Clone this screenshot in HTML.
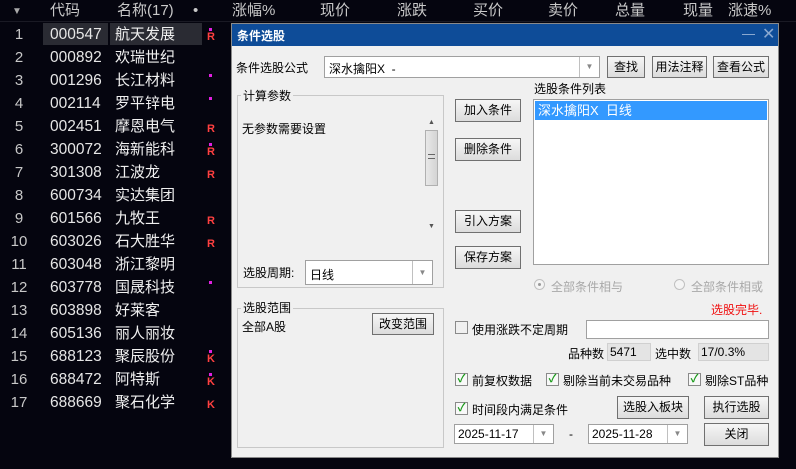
<!DOCTYPE html>
<html><head><meta charset="utf-8">
<style>
*{box-sizing:border-box;margin:0;padding:0}
body{width:796px;height:469px;background:#05050f;position:relative;overflow:hidden;font-family:"Liberation Sans","Noto Sans CJK SC",sans-serif}
.a{position:absolute;white-space:nowrap}
.h{color:#c8c8c8;font-size:15px;top:1px;line-height:20px}
.n,.c,.nm{line-height:21px;height:21px}
.n{color:#c8c8c8;font-size:15px;width:30px;text-align:center;left:4px}
.c{color:#e6e6e6;font-size:15.5px;left:50px}
.nm{color:#f0f0f0;font-size:15px;left:115px}
.dot{width:3px;height:3px;background:#e020e0;left:209px}
.mk{color:#ff4040;font-size:11px;font-weight:bold;left:207px}
.dlg{left:231px;top:23px;width:548px;height:435px;background:#f0f0f0;border:1px solid #8a8a8a}
.t{font-size:12px;color:#000}
.btn{position:absolute;background:linear-gradient(#f6f6f6,#dcdcdc);border:1px solid #707070;font-size:12px;text-align:center;color:#000}
.box{position:absolute;background:#fff;border:1px solid #a0a0a0}
.grp{position:absolute;border:1px solid #c8c8c8}
.cb{position:absolute;width:13px;height:13px;border:1px solid #8a8a8a;background:#f8f8f8;font-size:11px;color:#1a9a1a;line-height:11px;text-align:center;font-weight:bold}
.arr{position:absolute;right:0;top:0;bottom:0;width:20px;border-left:1px solid #c0c0c0;color:#888;font-size:8px;text-align:center}
</style></head><body>
<div class="a" style="left:0;top:0;width:796px;height:22px;background:#05050f;border-bottom:1px solid #1a1a24"></div>
<div class="a h" style="left:12px;font-size:10px;top:2px;color:#aaa">▼</div>
<div class="a h" style="left:50px">代码</div>
<div class="a h" style="left:117px">名称(17)</div>
<div class="a h" style="left:193px">•</div>
<div class="a h" style="left:232px">涨幅%</div>
<div class="a h" style="left:320px">现价</div>
<div class="a h" style="left:397px">涨跌</div>
<div class="a h" style="left:473px">买价</div>
<div class="a h" style="left:548px">卖价</div>
<div class="a h" style="left:615px">总量</div>
<div class="a h" style="left:683px">现量</div>
<div class="a h" style="left:728px">涨速%</div>
<div class="a" style="left:43px;top:23px;width:65px;height:22px;background:#2a2b33"></div>
<div class="a" style="left:110px;top:23px;width:92px;height:22px;background:#2a2b33"></div>

<div class="a n" style="top:24px">1</div><div class="a c" style="top:24px">000547</div><div class="a nm" style="top:24px">航天发展</div><div class="a dot" style="top:28px"></div><div class="a mk" style="top:31px">R</div>
<div class="a n" style="top:47px">2</div><div class="a c" style="top:47px">000892</div><div class="a nm" style="top:47px">欢瑞世纪</div>
<div class="a n" style="top:70px">3</div><div class="a c" style="top:70px">001296</div><div class="a nm" style="top:70px">长江材料</div><div class="a dot" style="top:74px"></div>
<div class="a n" style="top:93px">4</div><div class="a c" style="top:93px">002114</div><div class="a nm" style="top:93px">罗平锌电</div><div class="a dot" style="top:97px"></div>
<div class="a n" style="top:116px">5</div><div class="a c" style="top:116px">002451</div><div class="a nm" style="top:116px">摩恩电气</div><div class="a mk" style="top:123px">R</div>
<div class="a n" style="top:139px">6</div><div class="a c" style="top:139px">300072</div><div class="a nm" style="top:139px">海新能科</div><div class="a dot" style="top:143px"></div><div class="a mk" style="top:146px">R</div>
<div class="a n" style="top:162px">7</div><div class="a c" style="top:162px">301308</div><div class="a nm" style="top:162px">江波龙</div><div class="a mk" style="top:169px">R</div>
<div class="a n" style="top:185px">8</div><div class="a c" style="top:185px">600734</div><div class="a nm" style="top:185px">实达集团</div>
<div class="a n" style="top:208px">9</div><div class="a c" style="top:208px">601566</div><div class="a nm" style="top:208px">九牧王</div><div class="a mk" style="top:215px">R</div>
<div class="a n" style="top:231px">10</div><div class="a c" style="top:231px">603026</div><div class="a nm" style="top:231px">石大胜华</div><div class="a mk" style="top:238px">R</div>
<div class="a n" style="top:254px">11</div><div class="a c" style="top:254px">603048</div><div class="a nm" style="top:254px">浙江黎明</div>
<div class="a n" style="top:277px">12</div><div class="a c" style="top:277px">603778</div><div class="a nm" style="top:277px">国晟科技</div><div class="a dot" style="top:281px"></div>
<div class="a n" style="top:300px">13</div><div class="a c" style="top:300px">603898</div><div class="a nm" style="top:300px">好莱客</div>
<div class="a n" style="top:323px">14</div><div class="a c" style="top:323px">605136</div><div class="a nm" style="top:323px">丽人丽妆</div>
<div class="a n" style="top:346px">15</div><div class="a c" style="top:346px">688123</div><div class="a nm" style="top:346px">聚辰股份</div><div class="a dot" style="top:350px"></div><div class="a mk" style="top:353px">K</div>
<div class="a n" style="top:369px">16</div><div class="a c" style="top:369px">688472</div><div class="a nm" style="top:369px">阿特斯</div><div class="a dot" style="top:373px"></div><div class="a mk" style="top:376px">K</div>
<div class="a n" style="top:392px">17</div><div class="a c" style="top:392px">688669</div><div class="a nm" style="top:392px">聚石化学</div><div class="a mk" style="top:399px">K</div>

<div class="a dlg">
 <div class="a" style="left:0;top:0;width:546px;height:22px;background:#0e4c98"></div>
 <div class="a" style="left:5px;top:3px;color:#fff;font-size:12px;font-weight:bold">条件选股</div>
 <div class="a" style="left:510px;top:10px;width:13px;height:1px;background:#8aa8d0"></div>
 <div class="a" style="left:530px;top:0px;color:#8aa8d0;font-size:16px">✕</div>

 <div class="a t" style="left:4px;top:35px">条件选股公式</div>
 <div class="box" style="left:92px;top:32px;width:276px;height:22px"><span class="a t" style="left:4px;top:3px">深水擒阳X&nbsp;&nbsp;-</span><div class="arr" style="line-height:20px">▼</div></div>
 <div class="btn" style="left:375px;top:32px;width:38px;height:22px;line-height:20px">查找</div>
 <div class="btn" style="left:420px;top:32px;width:55px;height:22px;line-height:20px">用法注释</div>
 <div class="btn" style="left:481px;top:32px;width:56px;height:22px;line-height:20px">查看公式</div>

 <div class="grp" style="left:5px;top:71px;width:207px;height:193px"></div>
 <div class="a t" style="left:9px;top:63px;background:#f0f0f0;padding:0 2px">计算参数</div>
 <div class="a t" style="left:10px;top:96px">无参数需要设置</div>
 <div class="a" style="left:192px;top:92px;width:15px;height:118px;background:#f0f0f0"></div>
 <div class="a" style="left:196px;top:95px;font-size:7px;color:#555">▲</div>
 <div class="a" style="left:193px;top:106px;width:13px;height:56px;background:linear-gradient(90deg,#e8e8e8,#d4d4d4);border:1px solid #b0b0b0"></div>
 <div class="a" style="left:196px;top:130px;width:7px;height:5px;border-top:1px solid #666;border-bottom:1px solid #666"></div>
 <div class="a" style="left:196px;top:199px;font-size:7px;color:#555">▼</div>
 <div class="a t" style="left:11px;top:240px">选股周期:</div>
 <div class="box" style="left:73px;top:236px;width:128px;height:25px"><span class="a t" style="left:4px;top:5px">日线</span><div class="arr" style="line-height:23px">▼</div></div>

 <div class="grp" style="left:5px;top:284px;width:207px;height:140px"></div>
 <div class="a t" style="left:9px;top:275px;background:#f0f0f0;padding:0 2px">选股范围</div>
 <div class="a t" style="left:10px;top:294px">全部A股</div>
 <div class="btn" style="left:140px;top:289px;width:62px;height:22px;line-height:20px">改变范围</div>

 <div class="btn" style="left:223px;top:75px;width:66px;height:23px;line-height:21px">加入条件</div>
 <div class="btn" style="left:223px;top:114px;width:66px;height:23px;line-height:21px">删除条件</div>
 <div class="btn" style="left:223px;top:186px;width:66px;height:23px;line-height:21px">引入方案</div>
 <div class="btn" style="left:223px;top:222px;width:66px;height:23px;line-height:21px">保存方案</div>

 <div class="a t" style="left:302px;top:56px">选股条件列表</div>
 <div class="box" style="left:301px;top:75px;width:236px;height:166px"><div class="a" style="left:1px;top:1px;width:232px;height:19px;background:#3399ff;color:#fff;font-size:13px;padding-left:3px;line-height:19px">深水擒阳X&nbsp;&nbsp;日线</div></div>
 <div class="a" style="left:302px;top:255px;width:11px;height:11px;border-radius:50%;border:1px solid #c0c0c0;background:#f4f4f4"><div style="margin:3px;width:3px;height:3px;border-radius:50%;background:#999"></div></div>
 <div class="a t" style="left:319px;top:254px;color:#a8a8a8">全部条件相与</div>
 <div class="a" style="left:442px;top:255px;width:11px;height:11px;border-radius:50%;border:1px solid #c0c0c0;background:#f4f4f4"></div>
 <div class="a t" style="left:459px;top:254px;color:#a8a8a8">全部条件相或</div>
 <div class="a t" style="left:479px;top:277px;color:#f01010">选股完毕.</div>

 <div class="cb" style="left:223px;top:297px;background:#f0f0f0"></div>
 <div class="a t" style="left:240px;top:297px">使用涨跌不定周期</div>
 <div class="box" style="left:354px;top:296px;width:183px;height:19px"></div>
 <div class="a t" style="left:336px;top:321px">品种数</div>
 <div class="a t" style="left:375px;top:319px;width:44px;height:18px;background:#e4e4e4;border:1px solid #d0d0d0;padding:1px 2px">5471</div>
 <div class="a t" style="left:423px;top:321px">选中数</div>
 <div class="a t" style="left:466px;top:319px;width:71px;height:18px;background:#e4e4e4;border:1px solid #d0d0d0;padding:1px 2px">17/0.3%</div>

 <div class="cb" style="left:223px;top:349px">✓</div><div class="a t" style="left:240px;top:348px">前复权数据</div>
 <div class="cb" style="left:314px;top:349px">✓</div><div class="a t" style="left:331px;top:348px">剔除当前未交易品种</div>
 <div class="cb" style="left:456px;top:349px">✓</div><div class="a t" style="left:473px;top:348px">剔除ST品种</div>

 <div class="cb" style="left:223px;top:378px">✓</div><div class="a t" style="left:240px;top:377px">时间段内满足条件</div>
 <div class="btn" style="left:385px;top:372px;width:72px;height:23px;line-height:21px">选股入板块</div>
 <div class="btn" style="left:472px;top:372px;width:65px;height:23px;line-height:21px">执行选股</div>

 <div class="box" style="left:222px;top:400px;width:100px;height:20px"><span class="a" style="left:3px;top:2px;font-size:12px">2025-11-17</span><div class="arr" style="line-height:18px">▼</div></div>
 <div class="a t" style="left:337px;top:403px">-</div>
 <div class="box" style="left:356px;top:400px;width:100px;height:20px"><span class="a" style="left:3px;top:2px;font-size:12px">2025-11-28</span><div class="arr" style="line-height:18px">▼</div></div>
 <div class="btn" style="left:472px;top:399px;width:65px;height:23px;line-height:21px">关闭</div>
</div>
</body></html>
